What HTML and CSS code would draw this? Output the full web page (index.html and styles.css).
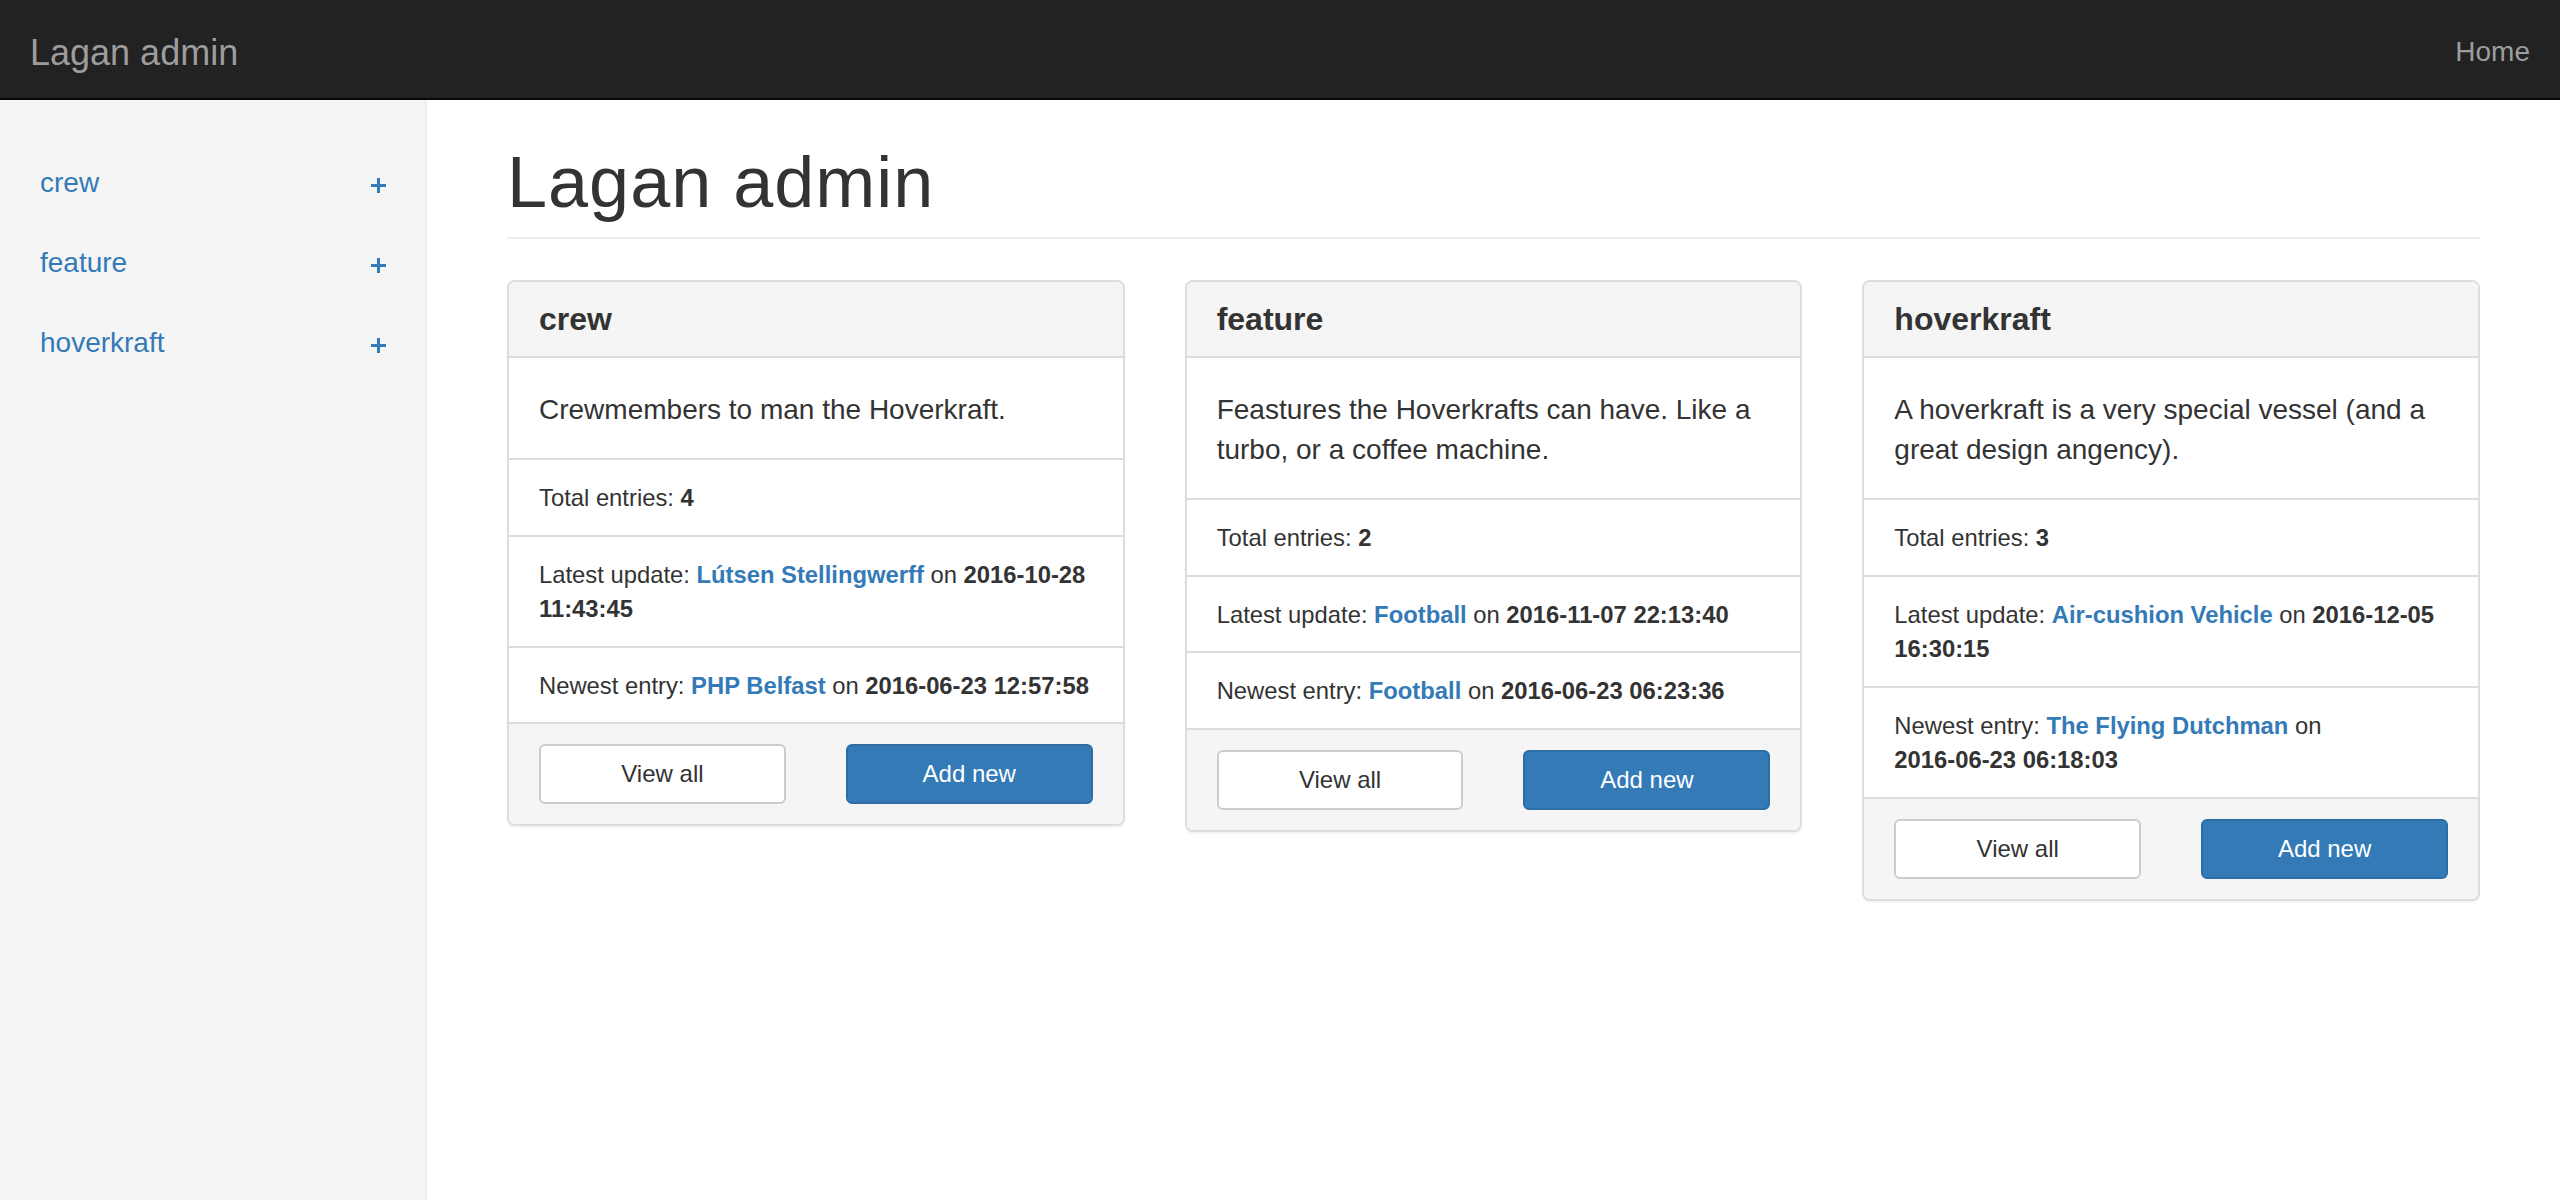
FILE: index.html
```html
<!DOCTYPE html>
<html lang="en">
<head>
<meta charset="utf-8">
<title>Lagan admin</title>
<link rel="stylesheet" href="styles.css">
</head>
<body>
<nav class="navbar">
  <a class="brand" href="#">Lagan admin</a>
  <a class="nav-link" href="#">Home</a>
</nav>
<div class="layout">
  <aside class="sidebar">
    <ul class="side-nav">
      <li><a href="#"><span>crew</span><svg class="plus" width="15" height="15" viewBox="0 0 15 15"><rect x="0" y="6" width="15" height="3"/><rect x="6" y="0" width="3" height="15"/></svg></a></li>
      <li><a href="#"><span>feature</span><svg class="plus" width="15" height="15" viewBox="0 0 15 15"><rect x="0" y="6" width="15" height="3"/><rect x="6" y="0" width="3" height="15"/></svg></a></li>
      <li><a href="#"><span>hoverkraft</span><svg class="plus" width="15" height="15" viewBox="0 0 15 15"><rect x="0" y="6" width="15" height="3"/><rect x="6" y="0" width="3" height="15"/></svg></a></li>
    </ul>
  </aside>
  <main class="main">
    <h1 class="page-header">Lagan admin</h1>
    <div class="cards">
      <section class="panel">
        <div class="panel-heading"><h3 class="panel-title">crew</h3></div>
        <div class="panel-body">Crewmembers to man the Hoverkraft.</div>
        <ul class="list-group">
          <li class="list-item">Total entries: <strong>4</strong></li>
          <li class="list-item">Latest update: <a class="link" href="#">Lútsen Stellingwerff</a> on <strong><span class="nb">2016-10-28</span> <span class="nb">11:43:45</span></strong></li>
          <li class="list-item">Newest entry: <a class="link" href="#">PHP Belfast</a> on <strong><span class="nb">2016-06-23</span> <span class="nb">12:57:58</span></strong></li>
        </ul>
        <div class="panel-footer">
          <a class="btn btn-default" href="#">View all</a>
          <a class="btn btn-primary" href="#">Add new</a>
        </div>
      </section>
      <section class="panel">
        <div class="panel-heading"><h3 class="panel-title">feature</h3></div>
        <div class="panel-body">Feastures the Hoverkrafts can have. Like a turbo, or a coffee machine.</div>
        <ul class="list-group">
          <li class="list-item">Total entries: <strong>2</strong></li>
          <li class="list-item">Latest update: <a class="link" href="#">Football</a> on <strong><span class="nb">2016-11-07</span> <span class="nb">22:13:40</span></strong></li>
          <li class="list-item">Newest entry: <a class="link" href="#">Football</a> on <strong><span class="nb">2016-06-23</span> <span class="nb">06:23:36</span></strong></li>
        </ul>
        <div class="panel-footer">
          <a class="btn btn-default" href="#">View all</a>
          <a class="btn btn-primary" href="#">Add new</a>
        </div>
      </section>
      <section class="panel">
        <div class="panel-heading"><h3 class="panel-title">hoverkraft</h3></div>
        <div class="panel-body">A hoverkraft is a very special vessel (and a great design angency).</div>
        <ul class="list-group">
          <li class="list-item">Total entries: <strong>3</strong></li>
          <li class="list-item">Latest update: <a class="link" href="#">Air-cushion Vehicle</a> on <strong><span class="nb">2016-12-05</span> <span class="nb">16:30:15</span></strong></li>
          <li class="list-item">Newest entry: <a class="link" href="#">The Flying Dutchman</a> on <strong><span class="nb">2016-06-23</span> <span class="nb">06:18:03</span></strong></li>
        </ul>
        <div class="panel-footer">
          <a class="btn btn-default" href="#">View all</a>
          <a class="btn btn-primary" href="#">Add new</a>
        </div>
      </section>
    </div>
  </main>
</div>
</body>
</html>
```

FILE: styles.css
```css
* {
  box-sizing: border-box;
}

html, body {
  margin: 0;
  padding: 0;
}

body {
  font-family: "Liberation Sans", Arial, Helvetica, sans-serif;
  font-size: 28px;
  line-height: 40px;
  color: #333;
  background: #fff;
}

a {
  text-decoration: none;
}

.nb {
  white-space: nowrap;
}

/* Navbar */
.navbar {
  height: 100px;
  background: #222;
  border-bottom: 2px solid #080808;
  display: flex;
  align-items: center;
  justify-content: space-between;
  padding: 0 30px 0 30px;
}

.brand {
  color: #9d9d9d;
  font-size: 36px;
  line-height: 40px;
  margin-top: 8px;
}

.nav-link {
  color: #9d9d9d;
  font-size: 28px;
  line-height: 40px;
  margin-top: 5px;
}

/* Layout */
.layout {
  display: flex;
  min-height: calc(100vh - 100px);
}

.sidebar {
  width: 427px;
  flex: 0 0 427px;
  background: #f5f5f5;
  border-right: 2px solid #eee;
  padding-top: 43px;
}

.side-nav {
  list-style: none;
  margin: 0;
  padding: 0;
}

.side-nav a {
  display: flex;
  align-items: center;
  justify-content: space-between;
  padding: 20px 39px 20px 40px;
  font-size: 28px;
  line-height: 40px;
  color: #337ab7;
}

.plus {
  fill: #337ab7;
  margin-top: 5px;
  display: block;
}

.main {
  flex: 1;
  padding: 43px 80px 40px 80px;
}

.page-header {
  margin: 0 0 41px 0;
  padding-bottom: 15px;
  border-bottom: 2px solid #eee;
  font-size: 72px;
  line-height: 79px;
  font-weight: 400;
  letter-spacing: 1px;
  color: #333;
}

/* Cards */
.cards {
  display: grid;
  grid-template-columns: repeat(3, 1fr);
  column-gap: 60px;
  align-items: start;
}

.panel {
  background: #fff;
  border: 2px solid #ddd;
  border-radius: 8px;
  box-shadow: 0 2px 2px rgba(0, 0, 0, 0.05);
  overflow: hidden;
}

.panel-heading {
  background: #f5f5f5;
  border-bottom: 2px solid #ddd;
  padding: 21px 30px 20px 30px;
}

.panel-title {
  margin: 0;
  font-size: 32px;
  line-height: 33px;
  font-weight: 700;
  color: #333;
}

.panel-body {
  padding: 32px 30px 28px 30px;
  font-size: 28px;
  line-height: 40px;
}

.list-group {
  list-style: none;
  margin: 0;
  padding: 0;
}

.list-item {
  border-top: 2px solid #ddd;
  padding: 21px 30px 19px 30px;
  font-size: 23.8px;
  line-height: 34.5px;
}

.list-item strong {
  font-weight: 700;
}

.link {
  color: #337ab7;
  font-weight: 700;
}

.panel-footer {
  background: #f5f5f5;
  border-top: 2px solid #ddd;
  padding: 20px 30px;
  display: grid;
  grid-template-columns: 1fr 1fr;
  column-gap: 60px;
}

.btn {
  display: block;
  height: 60px;
  border: 2px solid;
  border-radius: 6px;
  font-size: 24px;
  line-height: 56px;
  text-align: center;
}

.btn-default {
  background: #fff;
  border-color: #ccc;
  color: #333;
}

.btn-primary {
  background: #337ab7;
  border-color: #2e6da4;
  color: #fff;
}
```
